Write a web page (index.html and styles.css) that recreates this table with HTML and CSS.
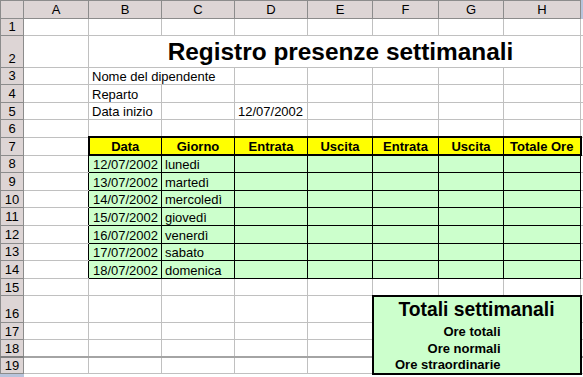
FILE: index.html
```html
<!DOCTYPE html>
<html lang="it">
<head>
<meta charset="utf-8">
<title>Registro presenze settimanali</title>
<link rel="stylesheet" href="styles.css">
</head>
<body>
<table class="sheet">
  <colgroup>
    <col class="c-rh"><col class="c-a"><col class="c-b"><col class="c-c"><col class="c-d"><col class="c-e"><col class="c-f"><col class="c-g"><col class="c-h"><col class="c-x">
  </colgroup>
  <tr class="r-head">
    <td class="hd corner"></td><td class="hd">A</td><td class="hd">B</td><td class="hd">C</td><td class="hd">D</td><td class="hd">E</td><td class="hd">F</td><td class="hd">G</td><td class="hd">H</td><td class="hd hx"></td>
  </tr>
  <tr class="r-std">
    <td class="hd">1</td><td></td><td></td><td></td><td></td><td></td><td></td><td></td><td></td><td class="x"></td>
  </tr>
  <tr class="r-title">
    <td class="hd rn-bottom">2</td><td></td><td colspan="7" class="title">Registro presenze settimanali</td><td class="x"></td>
  </tr>
  <tr class="r-std">
    <td class="hd">3</td><td></td><td colspan="2">Nome del dipendente</td><td></td><td></td><td></td><td></td><td></td><td class="x"></td>
  </tr>
  <tr class="r-std">
    <td class="hd">4</td><td></td><td>Reparto</td><td></td><td></td><td></td><td></td><td></td><td></td><td class="x"></td>
  </tr>
  <tr class="r-std">
    <td class="hd">5</td><td></td><td>Data inizio</td><td></td><td>12/07/2002</td><td></td><td></td><td></td><td></td><td class="x"></td>
  </tr>
  <tr class="r-std">
    <td class="hd">6</td><td></td><td></td><td></td><td></td><td></td><td></td><td></td><td></td><td class="x"></td>
  </tr>
  <tr class="r-std">
    <td class="hd">7</td><td></td>
    <td class="th th-first">Data</td><td class="th">Giorno</td><td class="th">Entrata</td><td class="th">Uscita</td><td class="th">Entrata</td><td class="th">Uscita</td><td class="th th-last">Totale Ore</td>
    <td class="x"></td>
  </tr>
  <tr class="r-std">
    <td class="hd">8</td><td class="edge"></td><td class="g date">12/07/2002</td><td class="g">lunedi</td><td class="g"></td><td class="g"></td><td class="g"></td><td class="g"></td><td class="g"></td><td class="x"></td>
  </tr>
  <tr class="r-std">
    <td class="hd">9</td><td class="edge"></td><td class="g date">13/07/2002</td><td class="g">martedì</td><td class="g"></td><td class="g"></td><td class="g"></td><td class="g"></td><td class="g"></td><td class="x"></td>
  </tr>
  <tr class="r-std">
    <td class="hd">10</td><td class="edge"></td><td class="g date">14/07/2002</td><td class="g">mercoledì</td><td class="g"></td><td class="g"></td><td class="g"></td><td class="g"></td><td class="g"></td><td class="x"></td>
  </tr>
  <tr class="r-std">
    <td class="hd">11</td><td class="edge"></td><td class="g date">15/07/2002</td><td class="g">giovedì</td><td class="g"></td><td class="g"></td><td class="g"></td><td class="g"></td><td class="g"></td><td class="x"></td>
  </tr>
  <tr class="r-std">
    <td class="hd">12</td><td class="edge"></td><td class="g date">16/07/2002</td><td class="g">venerdì</td><td class="g"></td><td class="g"></td><td class="g"></td><td class="g"></td><td class="g"></td><td class="x"></td>
  </tr>
  <tr class="r-std">
    <td class="hd">13</td><td class="edge"></td><td class="g date">17/07/2002</td><td class="g">sabato</td><td class="g"></td><td class="g"></td><td class="g"></td><td class="g"></td><td class="g"></td><td class="x"></td>
  </tr>
  <tr class="r-std">
    <td class="hd">14</td><td class="edge"></td><td class="g date">18/07/2002</td><td class="g">domenica</td><td class="g"></td><td class="g"></td><td class="g"></td><td class="g"></td><td class="g"></td><td class="x"></td>
  </tr>
  <tr class="r-std">
    <td class="hd">15</td><td></td><td></td><td></td><td></td><td></td><td></td><td></td><td></td><td class="x"></td>
  </tr>
  <tr class="r-16">
    <td class="hd rn-bottom">16</td><td></td><td></td><td></td><td></td><td></td><td colspan="3" class="box box-top">Totali settimanali</td><td class="x"></td>
  </tr>
  <tr class="r-std">
    <td class="hd">17</td><td></td><td></td><td></td><td></td><td></td><td colspan="2" class="box box-l lbl">Ore totali</td><td class="box box-r"></td><td class="x"></td>
  </tr>
  <tr class="r-18">
    <td class="hd">18</td><td></td><td></td><td></td><td></td><td></td><td colspan="2" class="box box-l lbl">Ore normali</td><td class="box box-r"></td><td class="x"></td>
  </tr>
  <tr class="r-19 frz">
    <td class="hd">19</td><td></td><td></td><td></td><td></td><td></td><td colspan="2" class="box box-l box-b lbl">Ore straordinarie</td><td class="box box-r box-b"></td><td class="x"></td>
  </tr>
  <tr class="r-end">
    <td class="hd hx"></td><td class="end"></td><td class="end"></td><td class="end"></td><td class="end"></td><td class="end"></td><td class="end"></td><td class="end"></td><td class="end"></td><td class="end"></td>
  </tr>
</table>
</body>
</html>
```

FILE: styles.css
```css
html, body {
  margin: 0;
  padding: 0;
  background: #ffffff;
}

.sheet {
  border-collapse: collapse;
  table-layout: fixed;
  width: 583px;
  font-family: "Liberation Sans", Arial, sans-serif;
  font-size: 13px;
  color: #000000;
}

.c-rh { width: 23px; }
.c-a { width: 65px; }
.c-b { width: 73px; }
.c-c { width: 73px; }
.c-d { width: 73px; }
.c-e { width: 65px; }
.c-f { width: 66px; }
.c-g { width: 65px; }
.c-h { width: 77px; }
.c-x { width: 3px; }

.sheet td {
  border: 1px solid #c0c0c0;
  padding: 0 3px;
  line-height: 15px;
  vertical-align: bottom;
  white-space: nowrap;
  overflow: visible;
}

.r-head { height: 17.5px; }
.r-std { height: 17.6px; }
.r-title { height: 31.5px; }
.r-16 { height: 26.5px; }
.r-18 { height: 17px; }
.r-19 { height: 16.6px; }
.r-end { height: 3px; }

.sheet td.hd {
  background: #ddd5d5;
  border: 1px solid #8c8c8c;
  text-align: center;
  vertical-align: middle;
  padding: 0;
  font-size: 13px;
}

.sheet td.hd.rn-bottom {
  vertical-align: bottom;
  padding-bottom: 1px;
}

.sheet td.corner {
  background: #ddd5d5;
}

.sheet td.hx {
  background: #b8c4dc;
  border-color: #b8c4dc;
}

.sheet td.x {
  padding: 0;
  border-right-color: #ffffff;
}

.sheet td.end {
  padding: 0;
  border: none;
  background: #ffffff;
}

.sheet td.title {
  font-size: 24.4px;
  font-weight: bold;
  line-height: 26px;
  text-align: center;
  padding: 0 0 2px 12px;
}

.sheet td.edge {
  border-right: 1px solid #000000;
}

.sheet td.th {
  background: #ffff00;
  font-weight: bold;
  text-align: center;
  vertical-align: middle;
  border: 1px solid #000000;
  border-top: 2px solid #000000;
  border-bottom: 2px solid #000000;
  padding: 0;
}

.sheet td.th-first { border-left: 2px solid #000000; }
.sheet td.th-last { border-right: 2px solid #000000; }

.sheet td.g {
  background: #ccffcc;
  border: 1px solid #000000;
}

.sheet td.date {
  text-align: right;
}

.sheet td.box {
  background: #ccffcc;
  font-weight: bold;
  vertical-align: middle;
  border-top: hidden;
  border-bottom: hidden;
  border-left: hidden;
  border-right: hidden;
}

.sheet td.box-top {
  font-size: 19.3px;
  line-height: 21px;
  text-align: center;
  border-top: 2px solid #000000;
  border-left: 2px solid #000000;
  border-right: 2px solid #000000;
  padding: 0;
}

.sheet td.box-l { border-left: 2px solid #000000; }
.sheet td.box-r { border-right: 2px solid #000000; }
.sheet td.box-b { border-bottom: 2px solid #000000; }

.sheet td.lbl {
  text-align: right;
  padding-right: 3px;
}

.frz td {
  border-top: 2px solid #a4a4a4;
}
.frz td.hd {
  border-top: 2px solid #808080;
}
.frz td.box {
  border-top: hidden;
}
```
